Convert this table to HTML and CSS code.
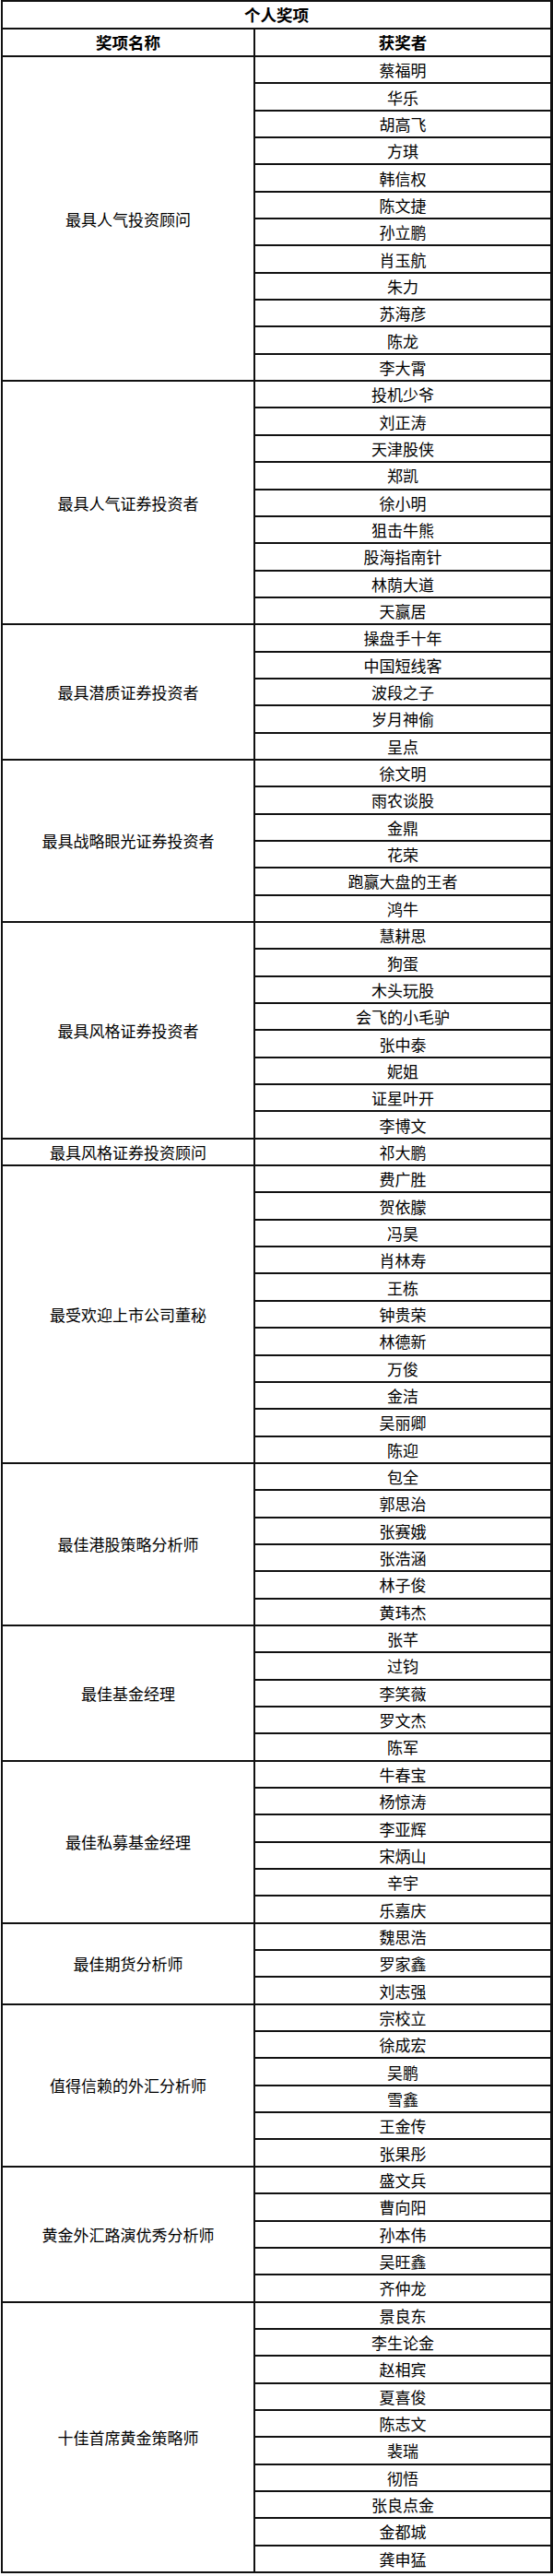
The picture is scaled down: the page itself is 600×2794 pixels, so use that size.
FILE: index.html
```html
<!DOCTYPE html>
<html lang="zh-CN">
<head>
<meta charset="utf-8">
<title>个人奖项</title>
<link rel="stylesheet" href="styles.css">
</head>
<body>
<div class="awards">
  <div class="cell title">个人奖项</div>
  <div class="cell head">奖项名称</div>
  <div class="cell head">获奖者</div>

  <div class="cell award r12">最具人气投资顾问</div>
  <div class="cell name">蔡福明</div>
  <div class="cell name">华乐</div>
  <div class="cell name">胡高飞</div>
  <div class="cell name">方琪</div>
  <div class="cell name">韩信权</div>
  <div class="cell name">陈文捷</div>
  <div class="cell name">孙立鹏</div>
  <div class="cell name">肖玉航</div>
  <div class="cell name">朱力</div>
  <div class="cell name">苏海彦</div>
  <div class="cell name">陈龙</div>
  <div class="cell name">李大霄</div>

  <div class="cell award r9">最具人气证券投资者</div>
  <div class="cell name">投机少爷</div>
  <div class="cell name">刘正涛</div>
  <div class="cell name">天津股侠</div>
  <div class="cell name">郑凯</div>
  <div class="cell name">徐小明</div>
  <div class="cell name">狙击牛熊</div>
  <div class="cell name">股海指南针</div>
  <div class="cell name">林荫大道</div>
  <div class="cell name">天赢居</div>

  <div class="cell award r5">最具潜质证券投资者</div>
  <div class="cell name">操盘手十年</div>
  <div class="cell name">中国短线客</div>
  <div class="cell name">波段之子</div>
  <div class="cell name">岁月神偷</div>
  <div class="cell name">呈点</div>

  <div class="cell award r6">最具战略眼光证券投资者</div>
  <div class="cell name">徐文明</div>
  <div class="cell name">雨农谈股</div>
  <div class="cell name">金鼎</div>
  <div class="cell name">花荣</div>
  <div class="cell name">跑赢大盘的王者</div>
  <div class="cell name">鸿牛</div>

  <div class="cell award r8">最具风格证券投资者</div>
  <div class="cell name">慧耕思</div>
  <div class="cell name">狗蛋</div>
  <div class="cell name">木头玩股</div>
  <div class="cell name">会飞的小毛驴</div>
  <div class="cell name">张中泰</div>
  <div class="cell name">妮姐</div>
  <div class="cell name">证星叶开</div>
  <div class="cell name">李博文</div>

  <div class="cell award r1">最具风格证券投资顾问</div>
  <div class="cell name">祁大鹏</div>

  <div class="cell award r11">最受欢迎上市公司董秘</div>
  <div class="cell name">费广胜</div>
  <div class="cell name">贺依朦</div>
  <div class="cell name">冯昊</div>
  <div class="cell name">肖林寿</div>
  <div class="cell name">王栋</div>
  <div class="cell name">钟贵荣</div>
  <div class="cell name">林德新</div>
  <div class="cell name">万俊</div>
  <div class="cell name">金洁</div>
  <div class="cell name">吴丽卿</div>
  <div class="cell name">陈迎</div>

  <div class="cell award r6">最佳港股策略分析师</div>
  <div class="cell name">包全</div>
  <div class="cell name">郭思治</div>
  <div class="cell name">张赛娥</div>
  <div class="cell name">张浩涵</div>
  <div class="cell name">林子俊</div>
  <div class="cell name">黄玮杰</div>

  <div class="cell award r5">最佳基金经理</div>
  <div class="cell name">张芊</div>
  <div class="cell name">过钧</div>
  <div class="cell name">李笑薇</div>
  <div class="cell name">罗文杰</div>
  <div class="cell name">陈军</div>

  <div class="cell award r6">最佳私募基金经理</div>
  <div class="cell name">牛春宝</div>
  <div class="cell name">杨惊涛</div>
  <div class="cell name">李亚辉</div>
  <div class="cell name">宋炳山</div>
  <div class="cell name">辛宇</div>
  <div class="cell name">乐嘉庆</div>

  <div class="cell award r3">最佳期货分析师</div>
  <div class="cell name">魏思浩</div>
  <div class="cell name">罗家鑫</div>
  <div class="cell name">刘志强</div>

  <div class="cell award r6">值得信赖的外汇分析师</div>
  <div class="cell name">宗校立</div>
  <div class="cell name">徐成宏</div>
  <div class="cell name">吴鹏</div>
  <div class="cell name">雪鑫</div>
  <div class="cell name">王金传</div>
  <div class="cell name">张果彤</div>

  <div class="cell award r5">黄金外汇路演优秀分析师</div>
  <div class="cell name">盛文兵</div>
  <div class="cell name">曹向阳</div>
  <div class="cell name">孙本伟</div>
  <div class="cell name">吴旺鑫</div>
  <div class="cell name">齐仲龙</div>

  <div class="cell award r10">十佳首席黄金策略师</div>
  <div class="cell name">景良东</div>
  <div class="cell name">李生论金</div>
  <div class="cell name">赵相宾</div>
  <div class="cell name">夏喜俊</div>
  <div class="cell name">陈志文</div>
  <div class="cell name">裴瑞</div>
  <div class="cell name">彻悟</div>
  <div class="cell name">张良点金</div>
  <div class="cell name">金都城</div>
  <div class="cell name">龚申猛</div>
</div>
</body>
</html>
```

FILE: styles.css
```css
html, body {
  margin: 0;
  padding: 0;
  background: #fff;
}

body {
  font-family: "Noto Sans CJK SC", "Noto Sans", sans-serif;
  color: #000;
}

.awards {
  display: grid;
  grid-template-columns: 272px 320px;
  grid-template-rows: 28px 28px repeat(93, 27.35px);
  gap: 2px;
  width: 596px;
  margin-left: 1px;
  background: #111;
  border: 2px solid #111;
}

.cell {
  background: #fff;
  display: flex;
  align-items: center;
  justify-content: center;
  font-size: 17px;
  line-height: 1;
  white-space: nowrap;
}

.title {
  grid-column: 1 / 3;
  font-size: 17.5px;
  font-weight: bold;
}

.head {
  font-size: 17.5px;
  font-weight: bold;
}

.award { grid-column: 1; }
.name { grid-column: 2; }

.r1 { grid-row: span 1; }
.r3 { grid-row: span 3; }
.r5 { grid-row: span 5; }
.r6 { grid-row: span 6; }
.r8 { grid-row: span 8; }
.r9 { grid-row: span 9; }
.r10 { grid-row: span 10; }
.r11 { grid-row: span 11; }
.r12 { grid-row: span 12; }
```
